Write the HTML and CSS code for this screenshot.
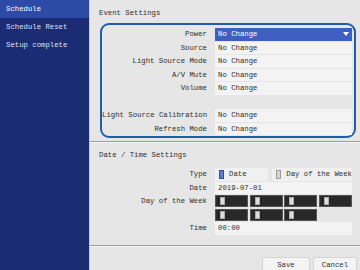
FILE: index.html
```html
<!DOCTYPE html>
<html lang="en">
<head>
  <meta charset="UTF-8">
  <title>Schedule</title>
  <link rel="stylesheet" href="styles.css">
</head>
<body>
  <!-- Side menu -->
  <nav class="sidebar">
    <div class="menu-item active">Schedule</div>
    <div class="menu-item">Schedule Reset</div>
    <div class="menu-item">Setup complete</div>
  </nav>

  <main class="main">
    <h2 class="section-title">Event Settings</h2>
    <div class="event-box">
      <div class="form-grid">
        <label>Power</label>
        <div class="field selected">No Change<span class="arrow"></span></div>
        <label>Source</label>
        <div class="field">No Change</div>
        <label>Light Source Mode</label>
        <div class="field">No Change</div>
        <label>A/V Mute</label>
        <div class="field">No Change</div>
        <label>Volume</label>
        <div class="field">No Change</div>
        <label></label>
        <div class="blank"></div>
        <label>Light Source Calibration</label>
        <div class="field">No Change</div>
        <label>Refresh Mode</label>
        <div class="field">No Change</div>
      </div>
    </div>

    <hr class="divider">

    <h2 class="section-title">Date / Time Settings</h2>
    <div class="form-grid date-grid">
      <label>Type</label>
      <div class="type-buttons">
        <div class="toggle date-toggle"><span class="mark on"></span>Date</div>
        <div class="toggle week-toggle"><span class="mark"></span>Day of the Week</div>
      </div>
      <label>Date</label>
      <div class="field">2019-07-01</div>
      <label>Day of the Week</label>
      <div class="week-days">
        <div class="day"><span></span></div>
        <div class="day"><span></span></div>
        <div class="day"><span></span></div>
        <div class="day"><span></span></div>
        <div class="day"><span></span></div>
        <div class="day"><span></span></div>
        <div class="day"><span></span></div>
      </div>
      <label></label>
      <label>Time</label>
      <div class="field">00:00</div>
    </div>

    <hr class="divider bottom">

    <div class="actions">
      <button class="btn save">Save</button>
      <button class="btn cancel">Cancel</button>
    </div>
  </main>
</body>
</html>
```

FILE: styles.css
```css
/* General Styles */
body {
  margin: 0;
  padding: 0;
  display: flex;
  height: 270px;
  overflow: hidden;
  font-family: "Liberation Mono", "DejaVu Sans Mono", monospace;
  font-size: 7.3px;
  color: #2e2e2e;
  background-color: #e6e6e6;
}

/* Sidebar */
.sidebar {
  width: 89px;
  flex-shrink: 0;
  background-color: #1b2b74;
  border-right: 1px solid #c9cbd6;
}

.menu-item {
  height: 18px;
  line-height: 18px;
  padding-left: 6px;
  color: #dfe3f0;
}

.menu-item.active {
  background-color: #2d4aa6;
  color: #fff;
}

/* Main area */
.main {
  flex: 1;
  padding-top: 8px;
}

.section-title {
  margin: 0 0 5px 9px;
  font-size: 7.3px;
  font-weight: normal;
  line-height: 10px;
}

.event-box {
  margin: 0 4px 0 10px;
  border: 2px solid #1f5cab;
  border-radius: 9px;
  padding: 3px 2px 1px 0;
}

.form-grid {
  display: grid;
  grid-template-columns: 105px 137px;
  column-gap: 8px;
  row-gap: 1px;
  grid-auto-rows: 12.5px;
}

.form-grid label {
  text-align: right;
  line-height: 12.5px;
  white-space: nowrap;
}

.field {
  position: relative;
  background-color: #f3f3f3;
  line-height: 12.5px;
  padding-left: 3px;
}

.field.selected {
  background-color: #3e5fc1;
  color: #fff;
}

.arrow {
  position: absolute;
  right: 3px;
  top: 4px;
  border-left: 3px solid transparent;
  border-right: 3px solid transparent;
  border-top: 4px solid #fff;
}

.divider {
  margin: 3px 0 7px;
  border: 0;
  border-top: 1px solid #9d9d9d;
  border-bottom: 1px solid #f4f4f4;
}

/* Date / Time */
.date-grid {
  margin: 8px 0 0 12px;
}

.type-buttons {
  display: flex;
  gap: 4px;
}

.toggle {
  display: flex;
  align-items: center;
  background-color: #f0f0f0;
  line-height: 12.5px;
  padding-left: 4px;
  white-space: nowrap;
}

.date-toggle {
  width: 52px;
}

.week-toggle {
  flex: 1;
}

.mark {
  display: inline-block;
  width: 3px;
  height: 7px;
  margin-right: 5px;
  border: 1px solid #9a9a9a;
  background-color: #d6d6d6;
}

.mark.on {
  border-color: #2b4fb0;
  background-color: #5b7ed6;
}

.week-days {
  grid-row: span 2;
  display: grid;
  grid-template-columns: repeat(4, 1fr);
  gap: 1.5px;
}

.day {
  display: flex;
  align-items: center;
  background-color: #282828;
  border: 1px solid #555;
  padding-left: 4px;
}

.day span {
  width: 3px;
  height: 6px;
  background-color: #ddd;
  border: 1px solid #aaa;
}

.divider.bottom {
  margin: 10px 0 10px;
}

/* Buttons */
.actions {
  display: flex;
  justify-content: flex-end;
  gap: 3px;
  padding-right: 3px;
}

.btn {
  font-family: "Liberation Mono", monospace;
  font-size: 7.3px;
  color: #333;
  background-color: #f4f4f4;
  border: 1px solid #d4d4d4;
  height: 16px;
}

.save {
  width: 48px;
}

.cancel {
  width: 44px;
}
```
